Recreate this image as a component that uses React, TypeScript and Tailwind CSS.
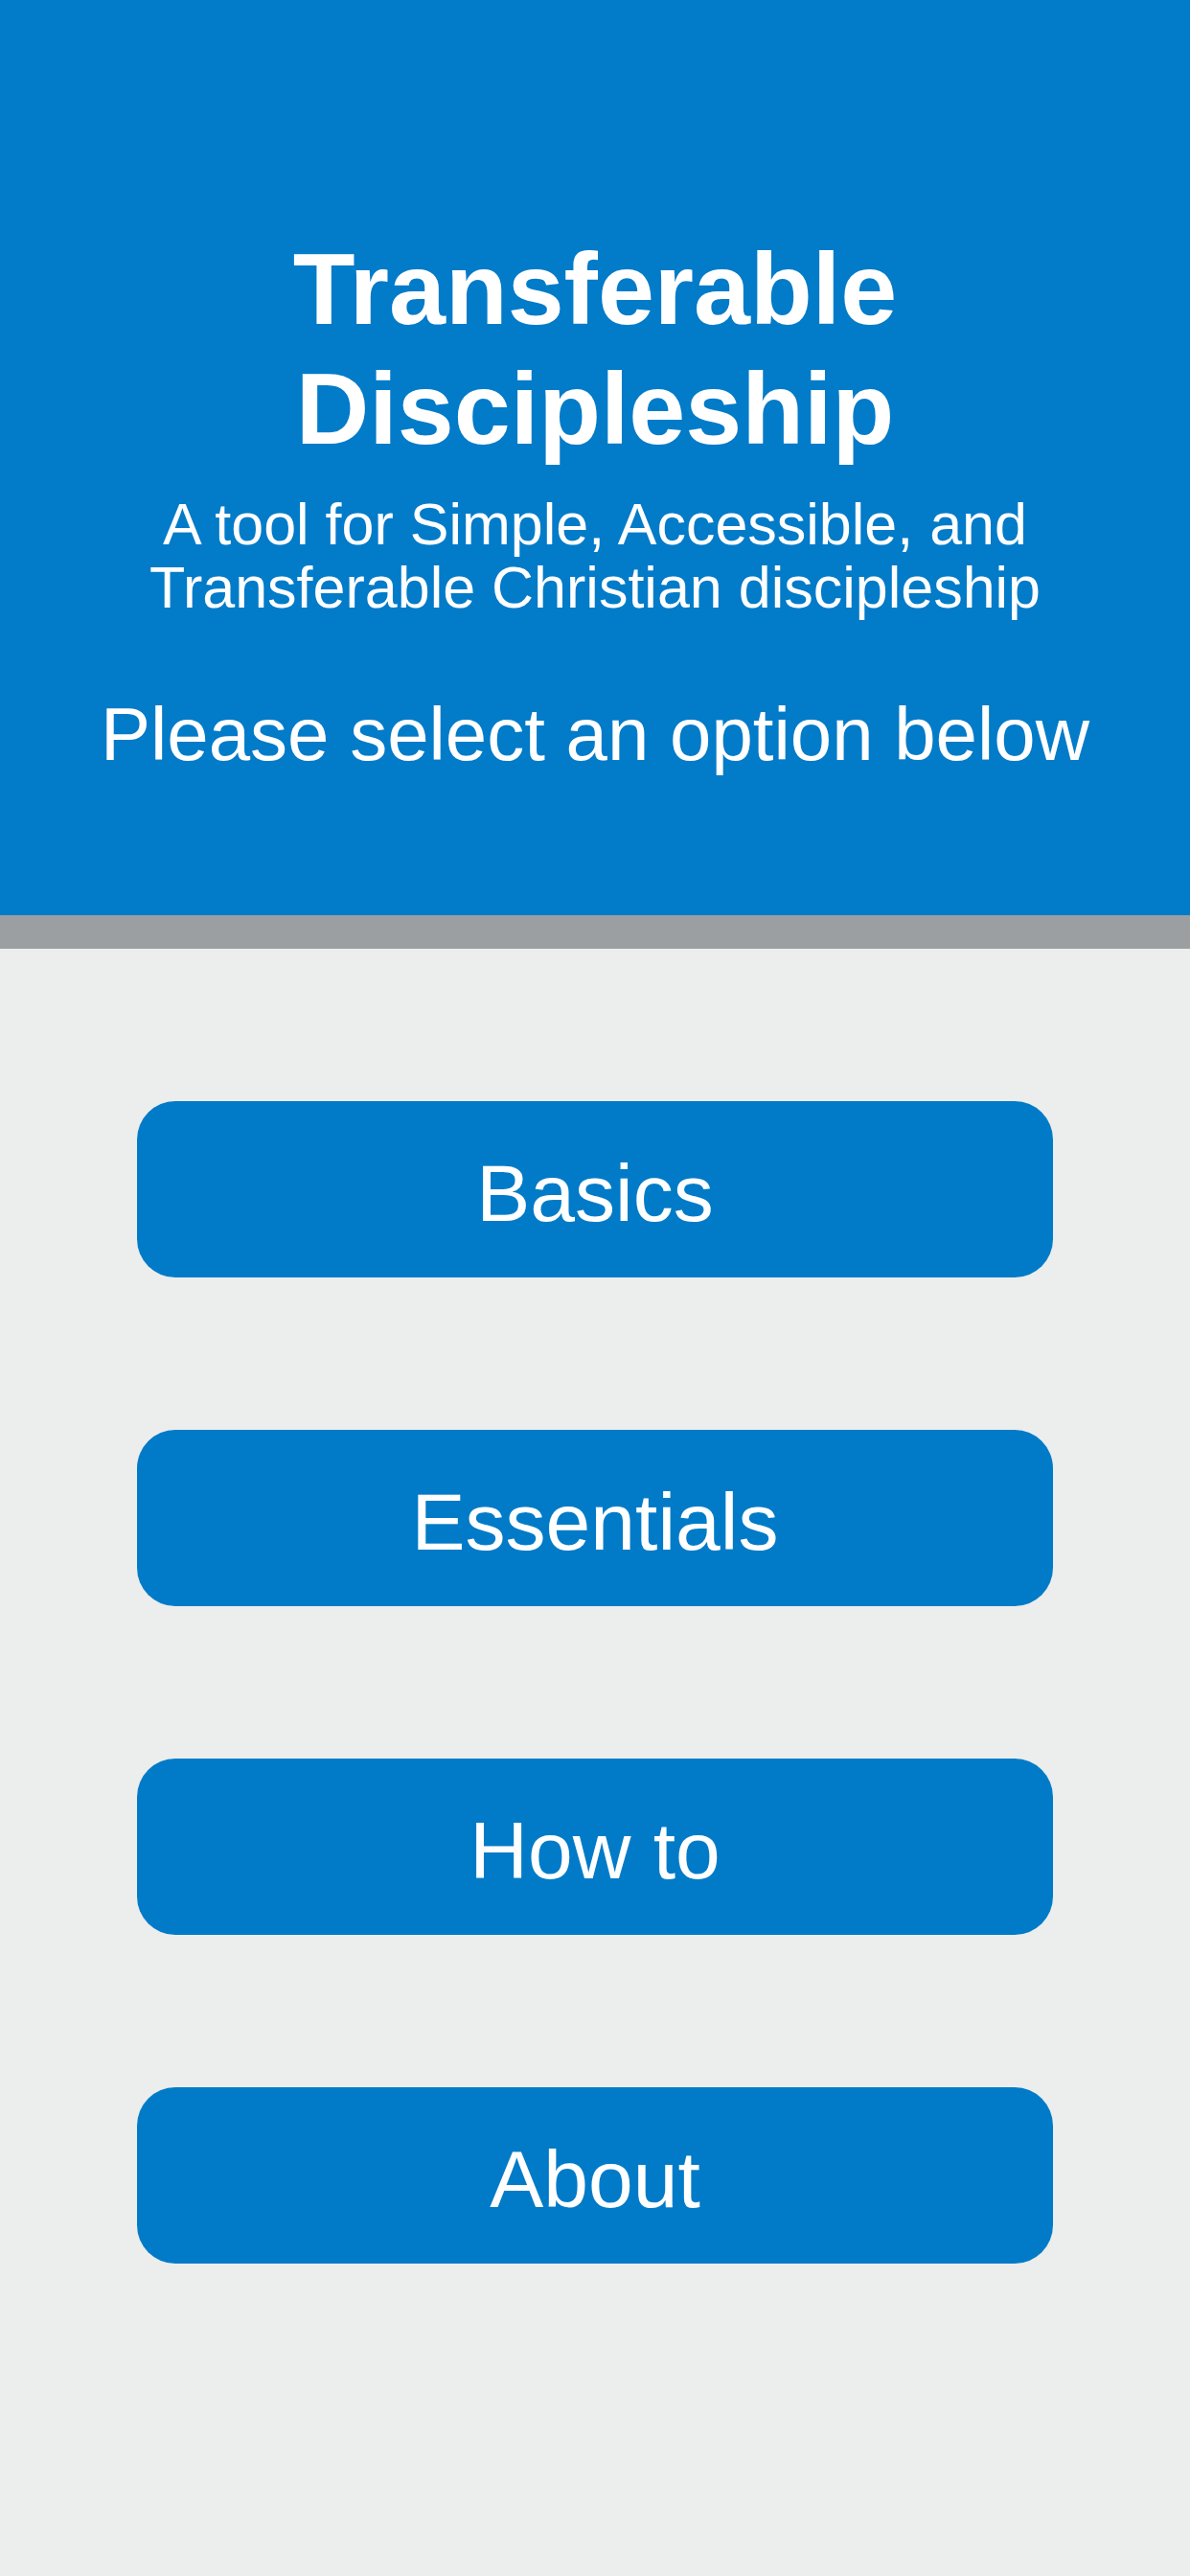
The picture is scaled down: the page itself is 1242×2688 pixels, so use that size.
const OPTIONS = ['Basics', 'Essentials', 'How to', 'About'];

export default function App() {
  return (
    <div className="min-h-screen bg-[#eceded] font-['Liberation_Sans',Arial,sans-serif] text-white">
      <header className="h-[955px] bg-[#027bc9] flex flex-col items-center pt-[239px] text-center">
        <h1 className="text-[106px] leading-[125px] font-bold">
          Transferable
          <br />
          Discipleship
        </h1>
        <p className="mt-[25px] text-[61px] leading-[66px]">
          A tool for Simple, Accessible, and
          <br />
          Transferable Christian discipleship
        </p>
        <p className="mt-[80px] text-[78px] leading-[80px]">Please select an option below</p>
      </header>
      <div className="h-[35px] bg-[#9c9fa2]" />
      <main className="flex flex-col items-center gap-[159px] pt-[159px] pb-[160px]">
        {OPTIONS.map((label) => (
          <button
            key={label}
            className="w-[956px] h-[184px] rounded-[40px] bg-[#017bc8] text-white text-[84px] pt-[8px] flex items-center justify-center"
          >
            {label}
          </button>
        ))}
      </main>
    </div>
  );
}
